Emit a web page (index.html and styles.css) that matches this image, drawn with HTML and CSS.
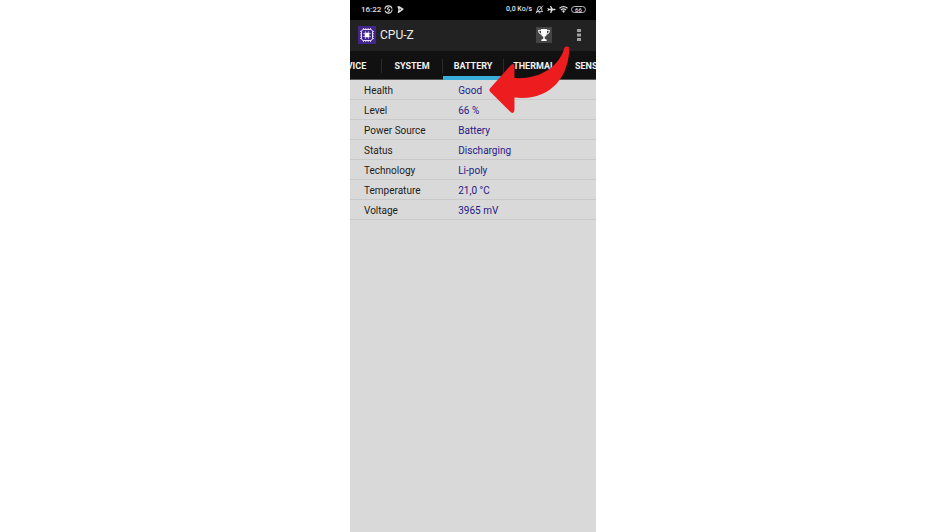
FILE: index.html
```html
<!DOCTYPE html>
<html lang="en">
<head>
<meta charset="utf-8">
<meta name="viewport" content="width=device-width, initial-scale=1">
<title>CPU-Z</title>
<link rel="stylesheet" href="styles.css">
</head>
<body>
<main class="phone">
  <div class="status">
    <span class="clock">16:22</span>
    <svg class="icon" viewBox="0 0 10 10" fill="none" stroke="currentColor"><circle cx="5" cy="5" r="4" stroke-width="1.2" stroke-dasharray="11 1.500"/><path d="M5.8 2.8Q3.6 3 4 5.2M6 4.4Q6.4 7 4.2 7.3M5 5h1.2" stroke-width="1.2"/></svg>
    <svg class="icon" viewBox="0 0 10 10"><path d="M1.500 1.500H4L8.700 4.500 7 6 3 9H2L2.700 5Z" fill="currentColor"/><path d="M4 3.700 6 4.700 4 6Z" fill="#333"/></svg>
    <span class="speed">0,0 Ko/s</span>
    <svg class="icon" viewBox="0 0 10 10" fill="none" stroke="currentColor" stroke-width="1"><path d="M1.5 7.3h7L7.5 6V4.2Q7.3 1.8 5 1.7 2.8 1.8 2.6 4.2V6ZM4 8.7h2M8.8.8 1 9.2"/></svg>
    <svg class="icon" viewBox="0 0 10 10"><path d="M9.5 5Q9.5 4.3 8.6 4.3H6.4L4.6 1.2H3.4L4.3 4.3H2.2L1.3 3.3H.5L1 5 .5 6.7h.8l.9-1h2.1L3.4 8.8h1.200L6.4 5.7h2.2Q9.5 5.7 9.5 5Z" fill="currentColor"/></svg>
    <svg class="icon" viewBox="0 0 10 10" fill="none" stroke="currentColor" stroke-width="1.3"><path d="M.5 3.7Q5 .1 9.5 3.7M2.1 5.5Q5 3.1 7.9 5.5"/><path d="M3.3 6.6Q5 5.3 6.7 6.6L5 8.8Z" fill="currentColor" stroke="none"/></svg>
    <span class="charge">66</span>
  </div>
  <header class="appbar">
    <svg class="logo" viewBox="0 0 18 18"><rect width="18" height="18" fill="#43268a"/><path d="M5.5 2v14M7.8 2v14M10.2 2v14M12.5 2v14M2 5.5h14M2 7.8h14M2 10.2h14M2 12.5h14" stroke="#cfc3ef" stroke-width="1"/><rect x="3.5" y="3.5" width="11" height="11" rx="2" fill="#43268a" stroke="#e6defa"/><path d="M5 7.500h8M5 10.500h8M7.500 5v8M10.500 5v8" stroke="#b7a6e4" stroke-width=".8"/><rect x="6.7" y="6.7" width="4.6" height="4.6" fill="#fff"/></svg>
    <h1 class="title">CPU-Z</h1>
    <button class="trophy" aria-label="Ranking"><svg viewBox="0 0 16 16"><path d="M5 2h6v4.5Q10.8 9.2 8.7 9.7v2.1l2 1v1.2H5.3v-1.2l2-1V9.7Q5.2 9.2 5 6.5Z" fill="#fff"/><path d="M5 3.3H2.5Q2.5 6.9 5.6 7.4M11 3.3h2.5Q13.5 6.9 10.4 7.4" fill="none" stroke="#fff"/></svg></button>
    <button class="more" aria-label="More options"><svg viewBox="0 0 4 14"><path d="M0 1h4v3H0ZM0 5.5h4v3H0ZM0 10h4v3H0Z" fill="#a2a2a2"/></svg></button>
  </header>
  <nav class="tabs">
    <a class="tab" href="#device">DEVICE</a>
    <a class="tab" href="#system">SYSTEM</a>
    <a class="tab active" href="#battery" aria-current="page">BATTERY</a>
    <a class="tab" href="#thermal">THERMAL</a>
    <a class="tab" href="#sensors">SENSORS</a>
  </nav>
  <table class="info">
    <tbody>
      <tr><th scope="row">Health</th><td>Good</td></tr>
      <tr><th scope="row">Level</th><td>66 %</td></tr>
      <tr><th scope="row">Power Source</th><td>Battery</td></tr>
      <tr><th scope="row">Status</th><td>Discharging</td></tr>
      <tr><th scope="row">Technology</th><td>Li-poly</td></tr>
      <tr><th scope="row">Temperature</th><td>21,0 °C</td></tr>
      <tr><th scope="row">Voltage</th><td>3965 mV</td></tr>
    </tbody>
  </table>
  <svg class="arrow" viewBox="0 0 84 72" aria-hidden="true"><path d="M1 44.5 22 21Q25.500 17.500 26 22V34C51 35.500 72 23 77.500 2.500Q80 .5 82.500 2.500C82 34 62 58 26 54V67Q25.500 71.500 22 69L1 48Q-.5 46.500 1 44.5Z" fill="#ed1c1f"/></svg>
</main>
</body>
</html>
```
FILE: styles.css
```css
* { box-sizing: border-box; }

body {
  margin: 0;
  min-height: 100vh;
  display: grid;
  grid-template-columns: 350fr 246fr 349fr;
  background: #fff;
  font-family: Roboto, "Liberation Sans", sans-serif;
}

.phone {
  grid-column: 2;
  min-width: 0;
  position: relative;
  background: #d9d9d9;
}

.status {
  display: flex;
  align-items: center;
  gap: 3px;
  height: 20px;
  padding: 0 10px 2px 11px;
  background: #000;
  color: #e0e0e0;
  font-size: 8px;
  font-weight: 500;
}

.clock { min-width: 20px; }
.speed { margin-left: auto; font-size: 7px; }
.icon { flex: none; width: 9px; height: 9px; }

.charge {
  width: 15px;
  height: 7px;
  border: 1px solid #bbb;
  border-radius: 4px;
  font-size: 6px;
  line-height: 5px;
  text-align: center;
}

.appbar {
  display: flex;
  align-items: center;
  height: 31px;
  padding: 0 15px 2px 8px;
  background: #222;
  color: #eee;
}

.logo { width: 18px; height: 18px; }

.title {
  margin: 0 auto 0 4px;
  font-size: 12px;
  font-weight: 400;
}

button {
  display: flex;
  padding: 0;
  border: 0;
  background: none;
}

.trophy {
  width: 16px;
  height: 16px;
  margin-right: 25px;
  background: #444;
}

.trophy svg { width: 16px; }
.more svg { width: 4px; height: 14px; }

.tabs {
  display: flex;
  justify-content: center;
  height: 29px;
  overflow: hidden;
  background: #111;
}

.tab {
  flex: none;
  width: 61px;
  padding-top: 2px;
  border-bottom: 1px solid #555;
  background: linear-gradient(#2b2b2b, #2b2b2b) right 8px / 1px 14px no-repeat;
  color: #f2f2f2;
  font-size: 9px;
  font-weight: 700;
  line-height: 27px;
  text-align: center;
  text-decoration: none;
}

.active { border-bottom: 4px solid #38aedb; }

.info {
  width: 100%;
  border-collapse: collapse;
  table-layout: fixed;
  font-size: 10px;
  line-height: 17px;
  text-align: left;
}

.info th,
.info td {
  padding: 2px 0 0;
  border-bottom: 1px solid #c9c9c9;
  font-weight: 400;
}

.info th {
  width: 44%;
  padding-left: 14px;
  color: #1c1c1c;
}

.info td { color: #241a87; }

.arrow {
  position: absolute;
  top: 45px;
  right: 25px;
  width: 82px;
  height: 70px;
}
```
